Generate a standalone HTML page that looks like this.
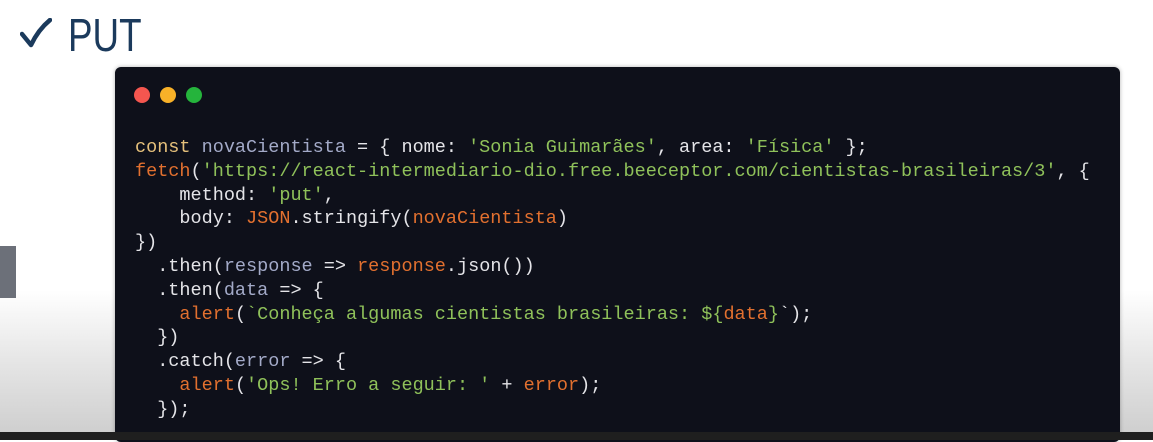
<!DOCTYPE html>
<html><head><style>
html,body{margin:0;padding:0}
body{width:1153px;height:440px;overflow:hidden;position:relative;background:linear-gradient(#fff 0,#fff 290px,#e6e6e6 360px,#cfcfcf 432px);font-family:"Liberation Sans",sans-serif}
.ck{position:absolute;left:20px;top:18px}
.put{position:absolute;left:68px;top:8px;color:#1b3a5c;font-size:46px;line-height:54px;transform:scaleX(0.8);transform-origin:0 0}
.win{position:absolute;left:115px;top:67px;width:1005px;height:375px;background:#0e101a;border-radius:6px;box-shadow:0 0 4px rgba(0,0,0,.3)}
.dot{position:absolute;top:20px;width:16px;height:16px;border-radius:50%}
pre{position:absolute;left:20px;top:69px;margin:0;font-family:"Liberation Mono",monospace;font-size:18.5px;line-height:23.8px;color:#e4e4e8}
.k{color:#e5c07b}.v{color:#a3aac8}.s{color:#8fc15a}.o{color:#e2702f}
.bar{position:absolute;left:0;top:432px;width:1153px;height:8px;background:#1f1f1f}
.side{position:absolute;left:0;top:246px;width:16px;height:52px;background:#6c7079}
</style></head><body>
<svg class="ck" width="32" height="30" viewBox="0 0 32 30"><path d="M2 16 L11 27 Q18 12 30 2" fill="none" stroke="#1b3a5c" stroke-width="4.5" stroke-linecap="round" stroke-linejoin="round"/></svg>
<div class="put">PUT</div>
<div class="side"></div>
<div class="win">
<div class="dot" style="left:19px;background:#f4564f"></div>
<div class="dot" style="left:45px;background:#f8b128"></div>
<div class="dot" style="left:71px;background:#25b43c"></div>
<pre><span class="k">const</span> <span class="v">novaCientista</span> = { nome: <span class="s">'Sonia Guimarães'</span>, area: <span class="s">'Física'</span> };
<span class="o">fetch</span>(<span class="s">'https://react-intermediario-dio.free.beeceptor.com/cientistas-brasileiras/3'</span>, {
    method: <span class="s">'put'</span>,
    body: <span class="o">JSON</span>.stringify(<span class="o">novaCientista</span>)
})
  .then(<span class="v">response</span> =&gt; <span class="o">response</span>.json())
  .then(<span class="v">data</span> =&gt; {
    <span class="o">alert</span>(<span class="s">`Conheça algumas cientistas brasileiras: ${</span><span class="o">data</span><span class="s">}</span>`);
  })
  .catch(<span class="v">error</span> =&gt; {
    <span class="o">alert</span>(<span class="s">'Ops! Erro a seguir: '</span> + <span class="o">error</span>);
  });</pre>
</div>
<div class="bar"></div>
</body></html>
